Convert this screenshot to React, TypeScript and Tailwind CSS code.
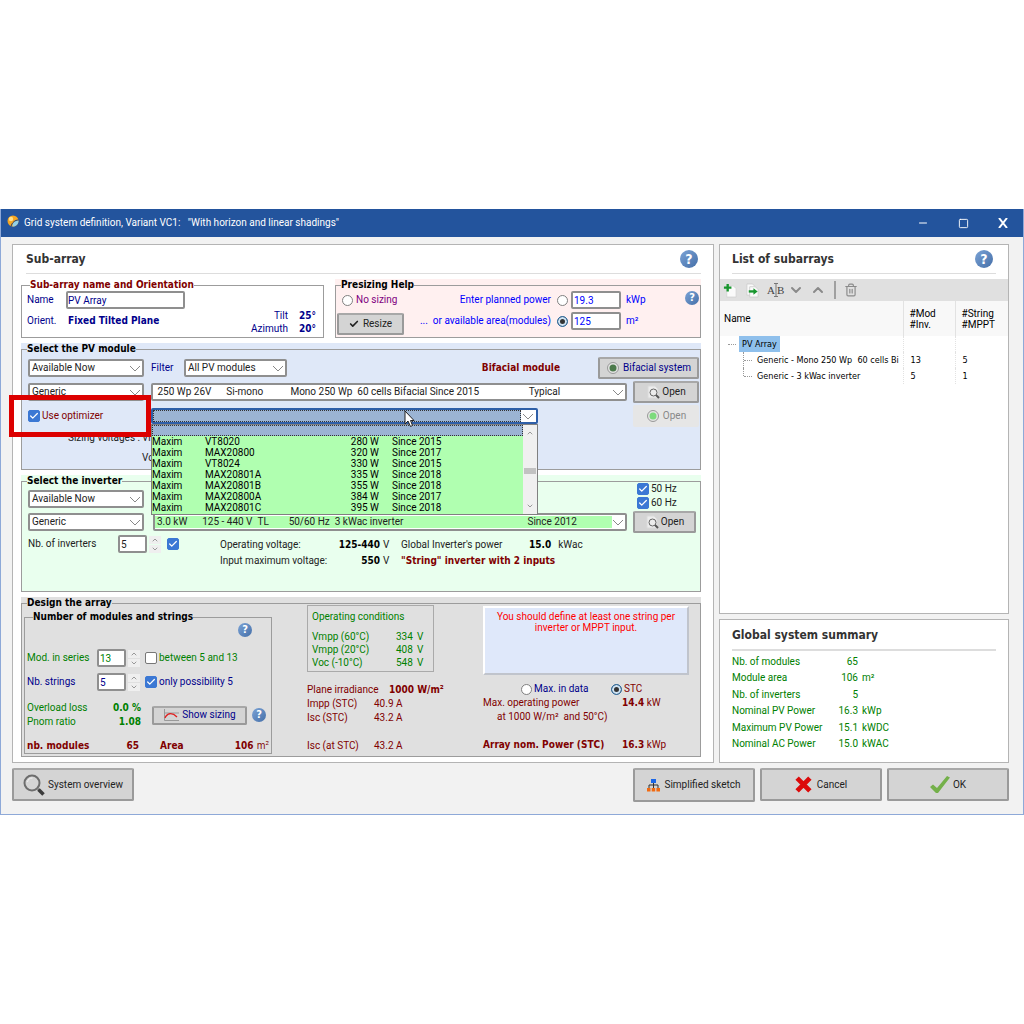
import React from "react";
import { Minus, Square, ChevronDown, ChevronUp, Trash2, Check } from "lucide-react";

const optimizers = [
  { brand: "Maxim", model: "VT8020", power: "280 W", since: "Since 2015" },
  { brand: "Maxim", model: "MAX20800", power: "320 W", since: "Since 2017" },
  { brand: "Maxim", model: "VT8024", power: "330 W", since: "Since 2015" },
  { brand: "Maxim", model: "MAX20801A", power: "335 W", since: "Since 2018" },
  { brand: "Maxim", model: "MAX20801B", power: "355 W", since: "Since 2018" },
  { brand: "Maxim", model: "MAX20800A", power: "384 W", since: "Since 2017" },
  { brand: "Maxim", model: "MAX20801C", power: "395 W", since: "Since 2018" },
];

const summary = [
  { label: "Nb. of modules", value: "65", unit: "" },
  { label: "Module area", value: "106", unit: "m²" },
  { label: "Nb. of inverters", value: "5", unit: "" },
  { label: "Nominal PV Power", value: "16.3", unit: "kWp" },
  { label: "Maximum PV Power", value: "15.1", unit: "kWDC" },
  { label: "Nominal AC Power", value: "15.0", unit: "kWAC" },
];

const conditions = [
  { label: "Vmpp (60°C)", value: "334" },
  { label: "Vmpp (20°C)", value: "408" },
  { label: "Voc (-10°C)", value: "548" },
];

// non-breaking spaces keep the columns inside an <option>
const gap = (n: number) => "\u00a0".repeat(n);

const Help = ({ small }: { small?: boolean }) => (
  <button
    type="button"
    aria-label="Help"
    className={`flex shrink-0 items-center justify-center rounded-full bg-linear-to-br from-[#7ba3d6] to-[#456fa8] font-bold text-white ${
      small ? "size-[14px] text-[11px] leading-[14px]" : "size-[18px] text-[14px] leading-[18px]"
    }`}
  >
    ?
  </button>
);

const PushButton = ({ className = "", ...props }: React.ButtonHTMLAttributes<HTMLButtonElement>) => (
  <button
    type="button"
    className={`flex shrink-0 items-center justify-center rounded-[2px] border-2 border-[#9a9a9a] border-t-[#a8a8a8] bg-[#d4d4d4] whitespace-nowrap ${className}`}
    {...props}
  />
);

const Tick = ({ label, checked, className = "" }: { label: string; checked?: boolean; className?: string }) => (
  <label className={`flex items-center gap-[2px] leading-[12px] whitespace-nowrap ${className}`}>
    <span className="relative size-[12px] shrink-0">
      <input
        type="checkbox"
        defaultChecked={checked}
        aria-label={label || "Enable"}
        className="peer block size-[12px] appearance-none rounded-[2px] border border-[#777] bg-white checked:border-[#3b78d4] checked:bg-[#3b78d4]"
      />
      <Check
        className="pointer-events-none absolute top-[1px] left-[1px] hidden size-[10px] text-white peer-checked:block"
        strokeWidth={3}
      />
    </span>
    {label}
  </label>
);

const Radio = ({ name, checked, label }: { name: string; checked?: boolean; label: string }) => (
  <input
    type="radio"
    name={name}
    aria-label={label}
    defaultChecked={checked}
    className="size-[11px] shrink-0 appearance-none rounded-full border border-[#808080] bg-white checked:border-[#2d6da3] checked:bg-[#333] checked:shadow-[inset_0_0_0_2px_#cfe4f5]"
  />
);

type DropProps = { label: string; options: string[]; className?: string; fill?: string };

const Drop = ({ label, options, className = "", fill = "bg-white" }: DropProps) => (
  <span className={`flex h-[18px] items-center rounded-[2px] border-2 border-[#8f8f8f] bg-white ${className}`}>
    <select aria-label={label} className={`h-[12px] min-w-0 flex-1 appearance-none px-[2px] leading-[12px] text-[#222] ${fill}`}>
      {options.map((o) => (
        <option key={o}>{o}</option>
      ))}
    </select>
    <svg className="pointer-events-none h-[7px] w-[13px] shrink-0" viewBox="0 0 13 7" fill="none" stroke="#888">
      <path d="M1 1l5 5 5-5" />
    </svg>
  </span>
);

const NumberBox = ({ label, value, className = "" }: { label: string; value: string; className?: string }) => (
  <span className={`flex items-center gap-[2px] ${className}`}>
    <input
      aria-label={label}
      defaultValue={value}
      className="h-[18px] w-[29px] rounded-[2px] border-2 border-[#8f8f8f] bg-white px-[1px]"
    />
    <span className="flex w-[12px] flex-col gap-px text-[#999]">
      <button type="button" aria-label={`${label} up`} className="flex h-[8px] items-center justify-center bg-[#efefef]">
        <ChevronUp size={8} strokeWidth={3} />
      </button>
      <button type="button" aria-label={`${label} down`} className="flex h-[8px] items-center justify-center bg-[#efefef]">
        <ChevronDown size={8} strokeWidth={3} />
      </button>
    </span>
  </span>
);

type GroupProps = { title: string; tint?: string; legend?: string; className?: string; children: React.ReactNode };

// The tint also shows above the frame line, so it sits on the wrapper
const Group = ({ title, tint = "", legend = "text-black", className = "", children }: GroupProps) => (
  <div className={`flex ${tint} ${className}`}>
    <fieldset className="min-w-0 flex-1 border border-[#9c9c9c]">
      <legend className={`ml-[5px] h-[12px] leading-[12px] font-bold ${legend}`}>{title}</legend>
      {children}
    </fieldset>
  </div>
);

const PageIcon = () => (
  <svg viewBox="0 0 14 14" className="mr-[2px] size-[14px]">
    <path d="M2 1h7l3 3v9H2z" fill="#ececec" stroke="#dadada" />
    <circle cx="7.5" cy="7.5" r="3.5" fill="none" stroke="#666" />
    <path d="M10 10l3 3" stroke="#555" strokeWidth="2" />
  </svg>
);

const Led = ({ color }: { color: string }) => (
  <svg viewBox="0 0 14 14" className="mr-[3px] size-[14px]">
    <circle cx="7" cy="7" r="5.5" fill="#e4e4e4" stroke="#999" />
    <circle cx="7" cy="7" r="3.5" fill={color} />
  </svg>
);

const TitleBar = () => (
  <header className="flex h-[28px] items-center bg-[#23549d] pl-[6px] text-white">
    <svg viewBox="0 0 12 12" className="mr-[5px] mb-[4px] size-[12px]">
      <circle cx="6" cy="6" r="5.5" fill="#f5a623" />
      <circle cx="4" cy="4" r="2.2" fill="#ffe08a" />
      <path d="M11.500 5.500c0 4-3 6-6 6 0-4 2-6 6-6z" fill="#8fd0ea" />
      <path d="M4 11.500c1-4 4-6.500 7.500-6.500" fill="none" stroke="#1c3f77" strokeWidth="1" />
    </svg>
    <h1 className="whitespace-pre">Grid system definition, Variant VC1:   "With horizon and linear shadings"</h1>
    <div className="ml-auto flex items-center">
      <button type="button" aria-label="Minimize" className="flex w-[40px] justify-center">
        <Minus size={12} strokeWidth={2} />
      </button>
      <button type="button" aria-label="Maximize" className="flex w-[40px] justify-center">
        <Square size={11} strokeWidth={2} />
      </button>
      <button type="button" aria-label="Close" className="flex w-[40px] justify-center">
        <svg viewBox="0 0 10 10" className="size-[10px] shrink-0" stroke="#fff" strokeWidth="2">
          <path d="M1 0l8 10M9 0L1 10" />
        </svg>
      </button>
    </div>
  </header>
);

const OptimizerList = () => (
  <div className="absolute top-[16px] left-0 z-10 flex w-full border border-[#808080] bg-[#f0f0f0]">
    <ul role="listbox" aria-label="Optimizers" className="flex-1 bg-[#b0ffb0] text-black">
      <li role="option" aria-selected="true" aria-label="None" className="h-[11px] border border-dotted border-[#333] bg-[#9bb4d3]" />
      {optimizers.map((o) => (
        <li key={o.model} role="option" aria-selected="false" className="flex h-[11px] leading-[12px] last:h-[12px]">
          <span className="w-[53px]">{o.brand}</span>
          <span className="w-[128px]">{o.model}</span>
          <span className="w-[46px] text-right">{o.power}</span>
          <span className="pl-[13px]">{o.since}</span>
        </li>
      ))}
    </ul>
    <div className="flex w-[14px] flex-col items-center justify-between py-[4px] text-[#999]">
      <ChevronUp size={8} strokeWidth={3} />
      <span className="mt-[2px] h-[6px] w-[12px] bg-[#c2c2c2]" />
      <ChevronDown size={8} strokeWidth={3} />
    </div>
  </div>
);

const NameGroup = () => (
  <Group title="Sub-array name and Orientation" legend="text-[#800000] ml-[8px]" className="min-h-[59px] w-[303px] text-[#00008b]">
    <div className="flex items-start pr-[7px] pl-[5px]">
      <div className="flex-1">
        <label className="flex items-center">
          <span className="w-[39px]">Name</span>
          <input defaultValue="PV Array" className="h-[18px] w-[119px] rounded-[2px] border-2 border-[#8f8f8f] bg-white" />
        </label>
        <p className="mt-[6px] flex leading-[12px]">
          <span className="w-[41px]">Orient.</span>
          <b>Fixed Tilted Plane</b>
        </p>
      </div>
      <dl className="mt-[18px] grid grid-cols-[auto_28px] text-right leading-[13px]">
        <dt>Tilt</dt>
        <dd className="font-bold">25°</dd>
        <dt>Azimuth</dt>
        <dd className="font-bold">20°</dd>
      </dl>
    </div>
  </Group>
);

const PresizingGroup = () => (
  <Group title="Presizing Help" tint="bg-[#fff0f0]" className="ml-[11px] min-h-[59px] flex-1">
    <div className="flex justify-between pr-[1px] pl-[1px]">
      <div>
        <label className="flex h-[18px] items-center gap-[3px] pl-[5px] text-[#800080]">
          <Radio name="sizing" label="No sizing" />
          No sizing
        </label>
        <PushButton className="mt-[4px] h-[22px] w-[67px] gap-[4px] text-[#222]">
          <Check size={10} strokeWidth={4} />
          Resize
        </PushButton>
      </div>
      <div className="ml-auto flex flex-col gap-[3px] text-[#0000ff]">
        <div className="flex items-center justify-end">
          <span className="pr-[6px]">Enter planned power</span>
          <Radio name="sizing" label="Enter planned power" />
          <input aria-label="Planned power" defaultValue="19.3" className="ml-[3px] h-[18px] w-[50px] rounded-[2px] border-2 border-[#8f8f8f] bg-white px-[1px]" />
          <span className="w-[26px] pl-[5px]">kWp</span>
        </div>
        <div className="flex items-center justify-end">
          <span className="pr-[6px] whitespace-pre">...  or available area(modules)</span>
          <Radio name="sizing" label="Available area" checked />
          <input aria-label="Available area" defaultValue="125" className="ml-[3px] h-[18px] w-[50px] rounded-[2px] border-2 border-[#8f8f8f] bg-white px-[1px]" />
          <span className="w-[26px] pl-[5px]">m²</span>
        </div>
      </div>
      <div className="ml-[38px]">
        <Help small />
      </div>
    </div>
  </Group>
);

const ModuleGroup = () => (
  <Group title="Select the PV module" tint="bg-[#dfe8f8]" className="min-h-[127px]">
    <div className="flex flex-col gap-[2px] pt-[2px] pr-[1px] pl-[6px]">
      <div className="flex h-[22px] items-center">
        <Drop label="Availability" options={["Available Now"]} className="w-[116px]" />
        <label className="flex items-center text-[#00008b]">
          <span className="w-[40px] pl-[7px]">Filter</span>
          <Drop label="Filter" options={["All PV modules"]} className="w-[103px]" />
        </label>
        <b className="mr-[38px] ml-auto text-[#800000]">Bifacial module</b>
        <PushButton className="h-[22px] w-[101px] text-[#00008b]">
          <Led color="#4c7a4c" />
          Bifacial system
        </PushButton>
      </div>
      <div className="flex h-[22px] items-center">
        <Drop label="Manufacturer" options={["Generic"]} className="w-[116px]" />
        <Drop
          label="PV module"
          className="mr-[6px] ml-[7px] flex-1"
          options={[
            `${gap(1)}250 Wp 26V${gap(6)}Si-mono${gap(11)}Mono 250 Wp${gap(2)}60 cells Bifacial${gap(1)}Since 2015${gap(20)}Typical`,
          ]}
        />
        <PushButton className="h-[22px] w-[66px] text-[#222]">
          <PageIcon />
          Open
        </PushButton>
      </div>
      <div className="relative flex h-[22px] items-center">
        <Tick label="Use optimizer" checked className="w-[123px] text-[#800000]" />
        <div className="relative w-[387px]">
          <span className="flex h-[16px] items-center rounded-[2px] border-2 border-[#2f5fa8] bg-white">
            <select aria-label="Optimizer" className="h-[12px] flex-1 appearance-none border border-dotted border-[#333] bg-[#9bb4d3]">
              <option />
            </select>
            <svg className="pointer-events-none h-[7px] w-[15px]" viewBox="0 0 15 7" fill="none" stroke="#888">
              <path d="M2 1l5 5 5-5" />
            </svg>
          </span>
          <OptimizerList />
          {/* mouse pointer */}
          <svg viewBox="0 0 12 18" className="absolute top-[2px] left-[253px] z-20 h-[18px] w-[12px]" fill="#fff" stroke="#222">
            <path d="M1 1v13l3-3 2.500 5.500 2-1L6.500 10.500H10z" />
          </svg>
        </div>
        <PushButton disabled className="ml-auto h-[22px] w-[66px] border-[#e6e6e6] border-t-[#e6e6e6] bg-[#e6e6e6] text-[#888]">
          <Led color="#7ddb7d" />
          Open
        </PushButton>
        <div className="pointer-events-none absolute top-[-10px] left-[-19px] z-20 h-[42px] w-[142px] border-[5px] border-[#dc0000]" />
      </div>
      <dl className="grid grid-cols-[72px_auto] justify-start gap-x-[2px] pl-[40px] leading-[12px] whitespace-nowrap text-[#222]">
        <dt className="pt-[3px]">Sizing voltages :</dt>
        <dd className="pt-[3px]">Vm</dd>
        <dd className="col-start-2 pt-[8px]">Vo</dd>
      </dl>
    </div>
  </Group>
);

const InverterGroup = () => (
  <Group title="Select the inverter" tint="bg-[#e9ffee]" className="min-h-[117px] text-[#222]">
    <div className="pr-[4px] pl-[6px]">
      <div className="flex h-[24px] items-center">
        <Drop label="Inverter availability" options={["Available Now"]} className="w-[116px]" />
        <div className="-mt-[4px] ml-auto flex w-[59px] flex-col gap-[2px] self-start">
          <Tick label="50 Hz" checked />
          <Tick label="60 Hz" checked />
        </div>
      </div>
      <div className="flex items-center">
        <Drop label="Inverter manufacturer" options={["Generic"]} className="w-[116px]" />
        <Drop
          label="Inverter"
          fill="bg-[#b0ffb0]"
          className="mr-[6px] ml-[9px] flex-1"
          options={[`3.0 kW${gap(6)}125 - 440 V${gap(2)}TL${gap(8)}50/60 Hz${gap(2)}3 kWac inverter${gap(50)}Since 2012`]}
        />
        <PushButton className="h-[22px] w-[63px]">
          <PageIcon />
          Open
        </PushButton>
      </div>
      <div className="mt-[2px] flex items-start">
        <div className="flex w-[192px] items-center">
          <span className="w-[90px]">Nb. of inverters</span>
          <NumberBox label="Nb. of inverters" value="5" />
          <Tick label="" checked className="ml-[6px]" />
        </div>
        <dl className="mt-[2px] grid grid-cols-[110px_50px_21px_128px_auto] leading-[16px] whitespace-nowrap">
          <dt>Operating voltage:</dt>
          <dd className="text-right font-bold text-black">125-440</dd>
          <dd className="pl-[3px]">V</dd>
          <dt>Global Inverter's power</dt>
          <dd>
            <b className="mr-[7px] text-black">15.0</b>kWac
          </dd>
          <dt>Input maximum voltage:</dt>
          <dd className="text-right font-bold text-black">550</dd>
          <dd className="pl-[3px]">V</dd>
          <dd className="col-span-2 font-bold text-[#800000]">"String" inverter with 2 inputs</dd>
        </dl>
      </div>
    </div>
  </Group>
);

const StringsGroup = () => (
  <Group title="Number of modules and strings" legend="text-black ml-[8px]" className="mt-[2px] ml-[2px] min-h-[143px] w-[248px]">
    <div className="pl-[2px] text-[#008000]">
      <div className="flex justify-end pr-[19px]">
        <Help small />
      </div>
      <div className="mt-[12px] flex h-[18px] items-center">
        <span className="w-[70px]">Mod. in series</span>
        <NumberBox label="Mod. in series" value="13" />
        <Tick label="between 5 and 13" className="ml-[5px]" />
      </div>
      <div className="mt-[6px] flex h-[18px] items-center text-[#00008b]">
        <span className="w-[70px]">Nb. strings</span>
        <NumberBox label="Nb. strings" value="5" />
        <Tick label="only possibility 5" checked className="ml-[5px]" />
      </div>
      <div className="mt-[10px] flex items-center">
        <dl className="grid w-[114px] grid-cols-[auto_auto] justify-between leading-[14px]">
          <dt>Overload loss</dt>
          <dd className="text-right font-bold">0.0 %</dd>
          <dt>Pnom ratio</dt>
          <dd className="text-right font-bold">1.08</dd>
        </dl>
        <PushButton className="ml-[11px] h-[19px] w-[95px] text-[#00008b]">
          <svg viewBox="0 0 16 12" className="mr-[3px] h-[12px] w-[16px]" fill="none">
            <path d="M1.500 0v11.500H16M1.500 4H16" stroke="#999" />
            <path d="M2 9c2-5 7-6 12-1" stroke="#e02020" strokeWidth="1.300" />
          </svg>
          Show sizing
        </PushButton>
        <span className="ml-[5px]">
          <Help small />
        </span>
      </div>
      <div className="mt-[10px] flex pr-[2px] font-bold text-[#800000]">
        <span>nb. modules</span>
        <span className="ml-auto">65</span>
        <span className="ml-[21px] w-[60px]">Area</span>
        <span className="w-[49px] text-right">
          106 <span className="font-normal">m²</span>
        </span>
      </div>
    </div>
  </Group>
);

const DesignGroup = () => (
  <Group title="Design the array" tint="bg-[#e0e0e0]" className="min-h-[160px]">
    <div className="flex items-start pr-[11px]">
      <StringsGroup />
      <div className="mt-[-4px] ml-[35px] w-[143px] text-[#800000]">
        <div className="w-[127px] border border-[#aaa] px-[4px] pt-[4px] pb-[2px] text-[#008000]">
          <p className="leading-[14px]">Operating conditions</p>
          <dl className="mt-[6px] grid grid-cols-[84px_21px_auto] leading-[13px]">
            {conditions.map((c) => (
              <React.Fragment key={c.label}>
                <dt>{c.label}</dt>
                <dd>{c.value}</dd>
                <dd>V</dd>
              </React.Fragment>
            ))}
          </dl>
        </div>
        <dl className="mt-[11px] grid grid-cols-[67px_auto] leading-[14px] whitespace-nowrap">
          <dt>Plane irradiance</dt>
          <dd className="pl-[15px] font-bold">1000 W/m²</dd>
          <dt>Impp (STC)</dt>
          <dd>40.9 A</dd>
          <dt>Isc (STC)</dt>
          <dd>43.2 A</dd>
          <dt className="mt-[14px]">Isc (at STC)</dt>
          <dd className="mt-[14px]">43.2 A</dd>
        </dl>
      </div>
      <div className="mt-[-3px] ml-auto w-[206px] text-[#800000]">
        <p className="h-[69px] border-2 border-white border-r-[#c0c4cc] border-b-[#c0c4cc] bg-[#dfe8fa] px-[10px] pt-[3px] text-center leading-[11px] text-[#ff0000]">
          You should define at least one string per inverter or MPPT input.
        </p>
        <div className="mt-[7px] flex h-[14px] items-center pl-[38px]">
          <label className="flex w-[90px] items-center gap-[2px] text-[#00008b]">
            <Radio name="basis" label="Max. in data" />
            Max. in data
          </label>
          <label className="flex items-center gap-[2px]">
            <Radio name="basis" label="STC" checked />
            STC
          </label>
        </div>
        <dl className="grid grid-cols-[139px_auto] leading-[14px] whitespace-nowrap">
          <dt className="whitespace-pre">
            Max. operating power
            <span className="block pl-[14px]">at 1000 W/m²  and 50°C)</span>
          </dt>
          <dd>
            <b>14.4</b> kW
          </dd>
          <dt className="mt-[14px] font-bold">Array nom. Power (STC)</dt>
          <dd className="mt-[14px]">
            <b>16.3</b> kWp
          </dd>
        </dl>
      </div>
    </div>
  </Group>
);

const SubarrayList = () => (
  <section className="flex-1 border border-[#b4b4b4] bg-white">
    <div className="mx-[12px] flex h-[29px] items-center justify-between border-b border-[#ddd] pr-[3px]">
      <h2 className="text-[12px] font-bold text-[#333]">List of subarrays</h2>
      <Help />
    </div>
    <div className="mt-[5px] flex h-[22px] items-center bg-[#e0e0e0] pl-[3px] text-[#8a8a8a]">
      <button type="button" aria-label="Add" className="w-[22px]">
        <svg viewBox="0 0 16 16" className="size-[15px]">
          <path d="M4 3h7l3 3v9H4z" fill="#fafafa" stroke="#d4d4d4" />
          <path d="M5 1v8M1 5h8" stroke="#18962e" strokeWidth="2.500" />
        </svg>
      </button>
      <button type="button" aria-label="Duplicate" className="w-[22px]">
        <svg viewBox="0 0 16 16" className="size-[15px]">
          <path d="M2 1h6l3 3v9H2z" fill="#fafafa" stroke="#cfcfcf" />
          <path d="M5 4h6l3 3v8H5z" fill="#fafafa" stroke="#cfcfcf" />
          <path d="M4 9h7" stroke="#18962e" strokeWidth="2.500" />
          <path d="M9 5.500L13.500 9 9 12.500z" fill="#18962e" />
        </svg>
      </button>
      <button type="button" aria-label="Rename" className="flex w-[21px] items-center font-['Liberation_Serif',serif] text-[11px] text-[#444]">
        A
        <svg viewBox="0 0 4 14" className="-mx-[1px] h-[14px] w-[4px] shrink-0" fill="none" stroke="#777">
          <path d="M0 .5h4M2 .5v13M0 13.500h4" />
        </svg>
        B
      </button>
      <button type="button" aria-label="Move down" className="w-[22px]">
        <ChevronDown size={16} strokeWidth={3} />
      </button>
      <button type="button" aria-label="Move up" className="w-[24px]">
        <ChevronUp size={16} strokeWidth={3} />
      </button>
      <span className="mr-[8px] h-[18px] w-[2px] bg-[#a0a0a0]" />
      <button type="button" aria-label="Delete">
        <Trash2 size={14} />
      </button>
    </div>
    <table className="w-full table-fixed border-collapse text-left text-black">
      <thead className="h-[35px] bg-[#f8f8f8]">
        <tr>
          <th className="border-r border-[#e2e2e2] pl-[4px] font-normal">Name</th>
          <th className="w-[52px] border-r border-[#e2e2e2] pl-[6px] leading-[11px] font-normal">
            #Mod
            <br />
            #Inv.
          </th>
          <th className="w-[53px] pl-[6px] leading-[11px] font-normal">
            #String
            <br />
            #MPPT
          </th>
        </tr>
      </thead>
      <tbody className="font-['DejaVu_Sans_Condensed',sans-serif] text-[9px]">
        <tr className="h-[16px]">
          <td className="border-r border-dotted border-[#e2e2e2]">
            <div className="flex items-center pl-[8px]">
              <span className="mr-[3px] w-[8px] border-t border-dotted border-[#999]" />
              <span className="bg-[#8fc0ec] px-[3px] leading-[16px]">PV Array</span>
            </div>
          </td>
          <td className="border-r border-dotted border-[#e2e2e2]" />
          <td />
        </tr>
        <tr className="h-[16px]">
          <td className="border-r border-dotted border-[#e2e2e2]">
            <div className="flex h-[16px] items-center overflow-hidden pl-[23px]">
              <span className="h-full border-l border-dotted border-[#999]" />
              <span className="mr-[5px] w-[8px] shrink-0 border-t border-dotted border-[#999]" />
              <span className="whitespace-pre">Generic - Mono 250 Wp  60 cells Bi</span>
            </div>
          </td>
          <td className="border-r border-dotted border-[#e2e2e2] pl-[7px]">13</td>
          <td className="pl-[7px]">5</td>
        </tr>
        <tr className="h-[16px]">
          <td className="border-r border-dotted border-[#e2e2e2]">
            <div className="flex h-[16px] items-center pl-[23px]">
              <span className="h-[8px] self-start border-l border-dotted border-[#999]" />
              <span className="mr-[5px] w-[8px] shrink-0 border-t border-dotted border-[#999]" />
              <span>Generic - 3 kWac inverter</span>
            </div>
          </td>
          <td className="border-r border-dotted border-[#e2e2e2] pl-[7px]">5</td>
          <td className="pl-[7px]">1</td>
        </tr>
      </tbody>
    </table>
  </section>
);

const SystemSummary = () => (
  <section className="border border-[#b4b4b4] bg-white px-[12px] pb-[10px]">
    <h2 className="flex h-[31px] items-center border-b-2 border-[#ddd] text-[12px] font-bold text-[#333]">Global system summary</h2>
    <table className="mt-[2px] text-[#008000]">
      <tbody>
        {summary.map((s) => (
          <tr key={s.label} className="odd:h-[17px] even:h-[16px]">
            <th className="w-[94px] text-left font-normal whitespace-nowrap">{s.label}</th>
            <td className="w-[32px] text-right">{s.value}</td>
            <td className="pl-[4px]">{s.unit}</td>
          </tr>
        ))}
      </tbody>
    </table>
  </section>
);

const Footer = () => (
  <footer className="mt-[5px] flex gap-[5px] text-[#222]">
    <PushButton className="h-[33px] w-[122px] gap-[3px]">
      <svg viewBox="0 0 22 22" className="size-[22px]" fill="none">
        <circle cx="9" cy="9" r="7.500" stroke="#6d6d6d" strokeWidth="2" />
        <path d="M4.500 8a5 5 0 0 1 5-4" stroke="#f2f2f2" />
        <path d="M14.500 14.500l2 2" stroke="#8a8a8a" strokeWidth="2" />
        <path d="M15.500 15.500l5 5" stroke="#3c3c3c" strokeWidth="3.500" />
      </svg>
      System overview
    </PushButton>
    <PushButton className="ml-auto h-[34px] w-[122px] gap-[4px]">
      <svg viewBox="0 0 13 13" className="size-[13px]">
        <path d="M4 0h5v4H4z" fill="#1a66e8" />
        <path d="M6.500 4v5M2 9V6h9v3" fill="none" stroke="#333" />
        <path d="M0 9h3.500v3.500H0zM4.700 9h3.500v3.500H4.700zM9.400 9H13v3.500H9.400z" fill="#f26a10" />
      </svg>
      Simplified sketch
    </PushButton>
    <PushButton className="h-[33px] w-[122px] gap-[5px]">
      <svg viewBox="0 0 16 16" className="size-[17px]" stroke="#dc0a0a" strokeWidth="4.500">
        <path d="M2 2l12 12M14 2L2 14" />
      </svg>
      Cancel
    </PushButton>
    <PushButton className="h-[33px] w-[122px] gap-[3px]">
      <svg viewBox="0 0 20 17" className="h-[17px] w-[20px]" fill="#74b04a">
        <path d="M0 11l3-2.500 4 3.500L17 0l3 1.500L8 17H6z" />
      </svg>
      OK
    </PushButton>
  </footer>
);

const App: React.FC = () => {
  return (
    <main className="flex min-h-screen flex-col justify-center bg-white font-['Roboto',sans-serif] text-[10px] leading-[14px] [&_.font-bold]:font-['DejaVu_Sans_Condensed',sans-serif] [&_b]:font-['DejaVu_Sans_Condensed',sans-serif]">
      <div className="border border-t-0 border-[#8ea9d8] bg-[#f2f2f2]">
        <TitleBar />
        <div className="pt-[7px] pr-[14px] pb-[12px] pl-[11px]">
          <div className="flex gap-[5px]">
            <section className="flex min-w-0 flex-1 flex-col gap-[5px] border border-[#b4b4b4] bg-white pr-[12px] pb-[5px] pl-[8px]">
              <div className="ml-[5px] flex h-[29px] items-center justify-between border-b border-[#ddd] pr-[3px]">
                <h2 className="text-[12px] font-bold text-[#333]">Sub-array</h2>
                <Help />
              </div>
              <div className="flex">
                <NameGroup />
                <PresizingGroup />
              </div>
              <ModuleGroup />
              <InverterGroup />
              <DesignGroup />
            </section>
            <aside className="flex w-[290px] shrink-0 flex-col gap-[5px]">
              <SubarrayList />
              <SystemSummary />
            </aside>
          </div>
          <Footer />
        </div>
      </div>
    </main>
  );
};

export default App;
